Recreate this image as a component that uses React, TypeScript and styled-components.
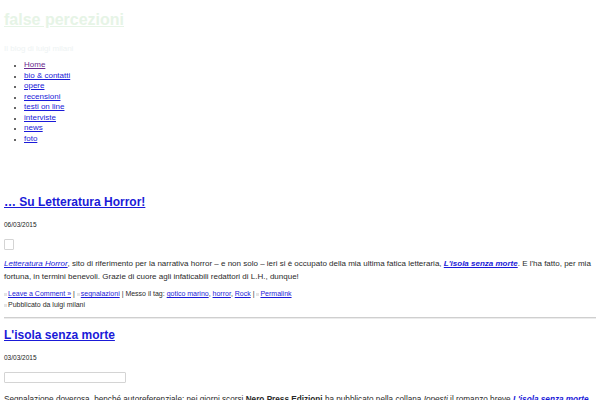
import React from 'react';
import styled, { createGlobalStyle } from 'styled-components';

const GlobalStyle = createGlobalStyle`
  html, body {
    margin: 0;
    padding: 0;
    background: #ffffff;
  }
  body {
    font-family: "Liberation Sans", Arial, Helvetica, sans-serif;
    color: #333333;
  }
`;

const navItems = [
  { label: 'Home', visited: true },
  { label: 'bio & contatti' },
  { label: 'opere' },
  { label: 'recensioni' },
  { label: 'testi on line' },
  { label: 'interviste' },
  { label: 'news' },
  { label: 'foto' },
];

const Meta = ({ tags }: { tags: string[] }) => (
  <MetaBox>
    <MetaLine>
      <Dot />
      <LinkA href="#">Leave a Comment »</LinkA> | <Dot />
      <LinkA href="#">segnalazioni</LinkA> | Messo il tag:{' '}
      {tags.map((t, i) => (
        <React.Fragment key={t}>
          <LinkA href="#">{t}</LinkA>
          {i < tags.length - 1 ? ', ' : ''}
        </React.Fragment>
      ))}{' '}
      | <Dot />
      <LinkA href="#">Permalink</LinkA>
    </MetaLine>
    <MetaLine>
      <Dot />
      Pubblicato da luigi milani
    </MetaLine>
  </MetaBox>
);

const App = () => {
  return (
    <Page>
      <GlobalStyle />
      <Header>
        <SiteTitle href="#">false percezioni</SiteTitle>
        <Tagline>Il blog di luigi milani</Tagline>
      </Header>
      <Nav>
        {navItems.map((n) => (
          <NavItem key={n.label}>
            <NavLink href="#" $visited={n.visited}>
              {n.label}
            </NavLink>
          </NavItem>
        ))}
      </Nav>

      <Post>
        <PostTitle $first>
          <a href="#">… Su Letteratura Horror!</a>
        </PostTitle>
        <PostDate>06/03/2015</PostDate>
        <BrokenImage $width={10} />
        <Para>
          <LinkA href="#">
            <em>Letteratura Horror</em>
          </LinkA>
          , sito di riferimento per la narrativa horror – e non solo – ieri si è occupato della
          mia ultima fatica letteraria,{' '}
          <LinkA href="#">
            <strong>
              <em>L'isola senza morte</em>
            </strong>
          </LinkA>
          . E l'ha fatto, per mia fortuna, in termini benevoli. Grazie di cuore agli infaticabili
          redattori di L.H., dunque!
        </Para>
        <Meta tags={['gotico marino', 'horror', 'Rock']} />
      </Post>

      <Divider />

      <Post>
        <PostTitle>
          <a href="#">L'isola senza morte</a>
        </PostTitle>
        <PostDate>03/03/2015</PostDate>
        <BrokenImage $width={122} />
        <Para $gap={10} $size={8.2}>
          Segnalazione doverosa, benché autoreferenziale: nei giorni scorsi{' '}
          <strong>Nero Press Edizioni</strong> ha pubblicato nella collana <em>Iopesti</em> il
          romanzo breve{' '}
          <LinkA href="#">
            <strong>
              <em>L'isola senza morte</em>
            </strong>
          </LinkA>
          . Un racconto gotico ambientato su un'isola del Mediterraneo.
        </Para>
      </Post>
    </Page>
  );
};

export default App;

const Page = styled.div`
  padding: 0 4px;
  width: 592px;
`;

const Header = styled.header`
  padding-top: 10px;
`;

const SiteTitle = styled.a`
  display: inline-block;
  font-size: 16px;
  font-weight: bold;
  line-height: 20px;
  color: #e6f4e6;
  text-decoration: underline;
`;

const Tagline = styled.div`
  margin-top: 13px;
  font-size: 8px;
  line-height: 12px;
  color: #eef3f3;
`;

const Nav = styled.ul`
  margin: 5px 0 0;
  padding-left: 20px;
  font-size: 8px;
  line-height: 10.5px;
`;

const NavItem = styled.li`
  list-style: disc;
  padding-left: 0;

  &::marker {
    font-size: 6px;
  }
`;

const NavLink = styled.a<{ $visited?: boolean }>`
  color: ${(p) => (p.$visited ? '#6a2a8e' : '#1a1ad8')};
  text-decoration: underline;
`;

const Post = styled.article`
  display: flex;
  flex-direction: column;
  align-items: flex-start;
`;

const PostTitle = styled.h2<{ $first?: boolean }>`
  margin: ${(p) => (p.$first ? '50px' : '8px')} 0 0;
  font-size: 12px;
  line-height: 16px;
  font-weight: bold;

  a {
    color: #1a1ad8;
    text-decoration: underline;
  }
`;

const PostDate = styled.div`
  margin-top: 11px;
  font-size: 6.5px;
  line-height: 8px;
  color: #222222;
`;

const BrokenImage = styled.div<{ $width: number }>`
  box-sizing: border-box;
  margin-top: 10px;
  width: ${(p) => p.$width}px;
  height: 11px;
  border: 1px solid #d4d4d4;
  border-radius: 1px;
`;

const Para = styled.p<{ $gap?: number; $size?: number }>`
  margin: ${(p) => p.$gap ?? 7}px 0 0;
  font-size: ${(p) => p.$size ?? 8}px;
  line-height: 13px;
  color: #2a2a2a;
`;

const LinkA = styled.a`
  color: #1a1ad8;
  text-decoration: underline;
`;

const MetaBox = styled.div`
  margin-top: 5px;
  font-size: 7px;
  line-height: 11px;
  color: #2a2a2a;
`;

const MetaLine = styled.div``;

const Dot = styled.span`
  display: inline-block;
  width: 3px;
  height: 3px;
  margin-right: 1px;
  background: #e4e4e4;
  vertical-align: middle;
`;

const Divider = styled.hr`
  margin: 7px 0 0;
  border: 0;
  border-top: 1px solid #cfcfcf;
  border-bottom: 1px solid #ececec;
`;
